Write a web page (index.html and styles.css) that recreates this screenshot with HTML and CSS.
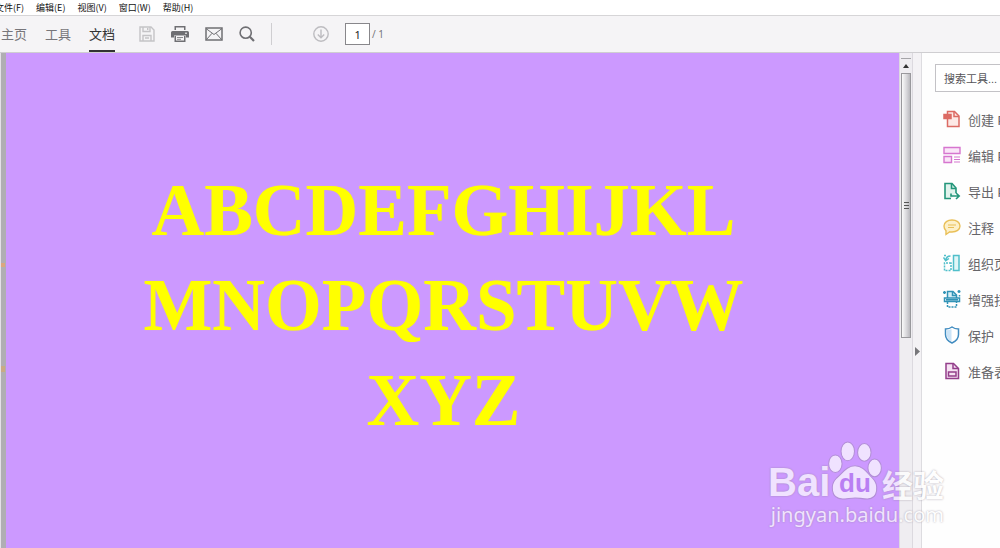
FILE: index.html
```html
<!DOCTYPE html>
<html lang="zh-CN">
<head>
<meta charset="utf-8">
<meta name="viewport" content="width=device-width, initial-scale=1">
<title>ABC</title>
<link rel="stylesheet" href="styles.css">
</head>
<body>
<div class="app">
  <nav class="menubar">
    <button class="menu">文件(F)</button>
    <button class="menu">编辑(E)</button>
    <button class="menu">视图(V)</button>
    <button class="menu">窗口(W)</button>
    <button class="menu">帮助(H)</button>
  </nav>
  <header class="toolbar">
    <button class="tab">主页</button>
    <button class="tab">工具</button>
    <button class="tab active">文档</button>
    <div class="tools">
      <button class="icon-btn" aria-label="保存"><svg width="16" height="16" viewBox="0 0 16 16" fill="none" stroke="#c4c3c6" stroke-width="1.4"><path d="M1 1h11l3 3v11H1zM4 1v4.500h7V1M4 15V9.500h8V15M8.700 2v2M6 12h4"/></svg></button>
      <button class="icon-btn" aria-label="打印"><svg width="18" height="16" viewBox="0 0 18 16"><path d="M3.500 0h11v4h-11zM1.500 5h15A1.500 1.500 0 0 1 18 6.500V11.500h-3V9.500H3v2H0v-5A1.500 1.500 0 0 1 1.500 5zM3.500 10h11v6h-11z" fill="#6f6f73"/><path d="M5 1.500h8V4H5zM5 10h8v4.500H5z" fill="#f5f4f6"/><path d="M6 11.500h6M6 13.300h4" stroke="#8a8a8e"/><path d="M14 7.200h2" stroke="#fff"/></svg></button>
      <button class="icon-btn" aria-label="邮件"><svg width="18" height="14" viewBox="0 0 18 14" fill="none" stroke="#6f6f73"><path d="M1 1h16v12H1z" stroke-width="1.500"/><path d="M1 1.500l8 6 8-6M1.500 12.500L7 6.300M16.500 12.500L11 6.300"/></svg></button>
      <button class="icon-btn" aria-label="查找"><svg width="16" height="16" viewBox="0 0 16 16" fill="none" stroke="#6f6f73"><circle cx="6.700" cy="6.700" r="5.600" stroke-width="1.600"/><path d="M10.800 10.800L15 15" stroke-width="2.200"/></svg></button>
    </div>
    <span class="divider"></span>
    <button class="icon-btn download" aria-label="下一页"><svg width="16" height="16" viewBox="0 0 16 16" fill="none" stroke="#bdbcc0" stroke-width="1.400"><circle cx="8" cy="8" r="7.200"/><path d="M8 3.500v8M4.800 8.500L8 11.700l3.200-3.200"/></svg></button>
    <input class="page-input" id="page" value="1" aria-label="页码">
    <label class="page-total" for="page">/ 1</label>
  </header>
  <div class="workspace">
    <div class="edge"></div>
    <main class="page">
      <h1 class="letters">ABCDEFGHIJKL<br>MNOPQRSTUVW<br>XYZ</h1>
    </main>
    <div class="scrollbar">
      <div class="split"></div>
      <button class="scroll-up" aria-label="向上滚动"><svg width="6" height="4" viewBox="0 0 6 4"><path d="M0 4l3-4 3 4z" fill="#333"/></svg></button>
      <div class="thumb"><svg width="5" height="7" viewBox="0 0 5 7" stroke="#555"><path d="M0 .5h5M0 3.500h5M0 6.500h5"/></svg></div>
    </div>
    <button class="collapse" aria-label="折叠"><svg width="5" height="9" viewBox="0 0 5 9"><path d="M0 0l5 4.500L0 9z" fill="#77767a"/></svg></button>
    <aside class="sidebar">
      <input class="search" type="text" placeholder="搜索工具..." aria-label="搜索工具">
      <button class="tool"><svg width="18" height="18" viewBox="0 0 18 18" fill="none" stroke="#dc6b64" stroke-width="1.500"><path d="M4.500 4V1.500h7l4.500 4.500v10.500H4.500V9" fill="#fde9e6"/><path d="M11 1.500V6.500h5"/><path d="M1 4.500h7v4H1z" fill="#dc6b64"/></svg>创建 PDF</button>
      <button class="tool"><svg width="18" height="18" viewBox="0 0 18 18" fill="#fae6f8" stroke="#d676cf" stroke-width="1.400"><path d="M1 1.500h16v6H1zM1 10.500h7.500v6H1z"/><path d="M11 11h6M11 13.500h6M11 16h6" stroke-width="1"/></svg>编辑 PDF</button>
      <button class="tool"><svg width="18" height="18" viewBox="0 0 18 18" fill="none" stroke="#24967b" stroke-width="1.600"><path d="M8 16.500H2V1.500h7l4 4.500v5" fill="#e1f3ed"/><path d="M8.500 1.500V6.500H13M8 11.500v2.500h8M13 11l3.200 3-3.200 3"/></svg>导出 PDF</button>
      <button class="tool"><svg width="18" height="18" viewBox="0 0 18 18" fill="#fdf0c8" stroke="#e9bf57" stroke-width="1.400"><path d="M3 12.700C1.500 11.500 1 9.700 1 8c0-3.700 3.600-6 8-6s8 2.300 8 6-3.600 6-8 6c-.8 0-1.500 0-2.200-.2L3 16.500z"/><path d="M5 7h8M5 9.500h6" stroke-width="1"/></svg>注释</button>
      <button class="tool"><svg width="18" height="18" viewBox="0 0 18 18" fill="none" stroke="#50bfca" stroke-width="1.500"><path d="M10.500 1.500H16v15h-5.500z" fill="#e0f6f7"/><path d="M8 9H1.500v7.500H8z" stroke-dasharray="2 1"/><path d="M7.500 2c-3 0-4.500 1.500-4.800 4.500M.5 3.500l2.200 3.200L6 4.500M1 1.500h2"/></svg>组织页面</button>
      <button class="tool"><svg width="18" height="18" viewBox="0 0 18 18" fill="none" stroke="#3193b6" stroke-width="1.500"><path d="M4.500 8V1.500H10l3.500 3.500v3" fill="#d9f0f8"/><path d="M9.500 2v3.500h4M1.500 11.500V8h15v3.500zM3 9.700h12"/><path d="M4.500 12v5h9v-5" stroke-dasharray="2 1"/><path d="M1.500 1v3M0 2.500h3M16 0v3M14.500 1.500h3M16.500 5v1.500"/></svg>增强扫描</button>
      <button class="tool"><svg width="18" height="18" viewBox="0 0 18 18" fill="#fff" stroke="#418cc0" stroke-width="1.500"><path d="M9 1c2 1.500 4.200 2 6.500 2v5.500c0 4-2.500 6.700-6.500 8.500-4-1.800-6.500-4.500-6.500-8.500V3C4.800 3 7 2.500 9 1z"/><path d="M8.500 3v12.500c-3-1.700-4.700-3.700-4.700-7V4.300c1.700-.1 3.200-.5 4.700-1.300z" fill="#cce4f7" stroke="none"/></svg>保护</button>
      <button class="tool"><svg width="18" height="18" viewBox="0 0 18 18" fill="none" stroke="#943f8b" stroke-width="1.500"><path d="M3 1.500h7.500L15.500 6.500v10H3z" fill="#f6e2f3"/><path d="M10 1.500V6.500h5.500M5.500 10h7.500v4H5.500z"/></svg>准备表单</button>
    </aside>
  </div>
  <div class="watermark">
    <div class="brand">
      <span class="brand-bai">Bai</span>
      <span class="paw"><svg width="54" height="60" viewBox="0 0 52 58" fill="#fff" stroke="#a98bc8" stroke-width="1"><ellipse cx="7" cy="22" rx="6.500" ry="8.500"/><ellipse cx="19" cy="10" rx="6.500" ry="9"/><ellipse cx="35" cy="11" rx="6.500" ry="8.500"/><ellipse cx="45" cy="26" rx="6.500" ry="8.500"/><path d="M26 24c8 0 12 7 17 12 6 6 6 20-5 20-5 0-8-1-12-1s-8 1-12 1C2 56 2 42 8 36c6-5 10-12 18-12z"/></svg><span class="du">du</span></span>
      <span class="brand-cn">经验</span>
    </div>
    <div class="site">jingyan.baidu.com</div>
  </div>
</div>
</body>
</html>
```
FILE: styles.css
```css
* { box-sizing: border-box; }
body {
  margin: 0;
  font-family: "Liberation Sans", "Noto Sans CJK SC", sans-serif;
  color: #77767a;
  background: #fff;
}
button {
  border: 0;
  padding: 0;
  background: none;
  color: inherit;
  font: inherit;
  white-space: nowrap;
}
svg { display: block; flex: none; }
.app {
  position: relative;
  display: flex;
  flex-direction: column;
  height: 100vh;
  overflow: hidden;
}
.menubar {
  display: flex;
  gap: 12px;
  height: 15px;
  flex: none;
  margin-left: -5px;
}
.menu {
  font-family: "Noto Sans CJK SC", sans-serif;
  font-size: 9px;
  line-height: 15px;
  color: #111;
}
.toolbar {
  display: flex;
  align-items: center;
  height: 38px;
  flex: none;
  padding-left: 1px;
  background: #f5f4f6;
  border-top: 1px solid #d6d5d7;
  border-bottom: 1px solid #cfced1;
}
.tab {
  height: 36px;
  margin-right: 18px;
  border-bottom: 2px solid transparent;
  font-size: 13px;
  color: #77767a;
}
.tab.active {
  color: #333;
  border-bottom-color: #333;
}
.tools {
  display: flex;
  align-items: center;
  gap: 16px;
  margin-left: 6px;
}
.divider {
  width: 1px;
  height: 22px;
  margin-left: 16px;
  background: #cfced1;
}
.download { margin-left: 41px; }
.page-input {
  width: 25px;
  height: 22px;
  margin-left: 16px;
  padding: 0;
  border: 1px solid #88878b;
  background: #fff;
  color: #222;
  font: 11px "Noto Sans", sans-serif;
  text-align: center;
}
.page-total {
  margin-left: 2px;
  font: 10px "Noto Sans", sans-serif;
}
.workspace {
  display: flex;
  flex: 1;
  min-height: 0;
}
.edge {
  width: 6px;
  border-left: 1px solid #e4e0e8;
  background:
    linear-gradient(#dba67f, #dba67f) 0 210px / 4px 4px no-repeat,
    linear-gradient(#c9aa84, #c9aa84) 0 313px / 4px 6px no-repeat,
    #b0aeb3;
}
.page {
  flex: 1;
  padding: 110px 18px 0 0;
  background: #cc99ff;
}
.letters {
  margin: 0;
  font: bold 73px/95px "Liberation Serif", serif;
  font-kerning: none;
  color: #ffff00;
  text-align: center;
  text-shadow: 0 0 1px #e0c090;
}
.scrollbar {
  display: flex;
  flex-direction: column;
  width: 14px;
  padding: 0 1px;
  background: #efedf1;
  border-left: 1px solid #dcd9df;
  border-right: 1px solid #dcd9df;
}
.split {
  height: 6px;
  border-bottom: 1px solid #a5a4a8;
}
.scroll-up {
  display: grid;
  place-items: center;
  height: 14px;
}
.thumb {
  display: grid;
  place-items: center;
  height: 265px;
  border: 1px solid #99989c;
  background: linear-gradient(90deg, #fafafa, #d6d5d9 60%, #b9b8bd);
}
.collapse {
  display: grid;
  place-items: center;
  width: 9px;
  padding-top: 102px;
  background: #f4f2f5;
  border-right: 1px solid #dddce0;
}
.sidebar {
  display: flex;
  flex-direction: column;
  width: 78px;
  padding: 11px 0 0 13px;
  overflow: hidden;
  background: #fefefe;
}
.search {
  width: 160px;
  height: 28px;
  flex: none;
  margin-bottom: 10px;
  padding: 2px 8px 0;
  border: 1px solid #c3c2c6;
  background: #fff;
  font: 11px "Liberation Sans", "Noto Sans CJK SC", sans-serif;
}
.search::placeholder { color: #555458; opacity: 1; }
.tool {
  display: flex;
  align-items: center;
  gap: 7px;
  height: 36px;
  flex: none;
  padding: 0 0 2px 8px;
  font-size: 13px;
  color: #666569;
}
.watermark {
  position: absolute;
  right: 56px;
  bottom: 19px;
  color: #fff;
  opacity: 0.72;
  text-shadow: 0 0 2px #8d8496;
}
.brand {
  display: flex;
  align-items: flex-end;
}
.brand-bai {
  width: 60px;
  font-size: 40px;
  font-weight: bold;
  line-height: 38px;
}
.paw { position: relative; }
.du {
  position: absolute;
  inset: 30px 0 0;
  text-align: center;
  font-size: 26px;
  font-weight: bold;
  line-height: 25px;
  color: #b276ef;
  text-shadow: none;
}
.brand-cn {
  font: bold 31px/34px "Noto Sans CJK SC", sans-serif;
}
.site {
  font: 20px/28px "Noto Sans", sans-serif;
  text-align: right;
}
```
